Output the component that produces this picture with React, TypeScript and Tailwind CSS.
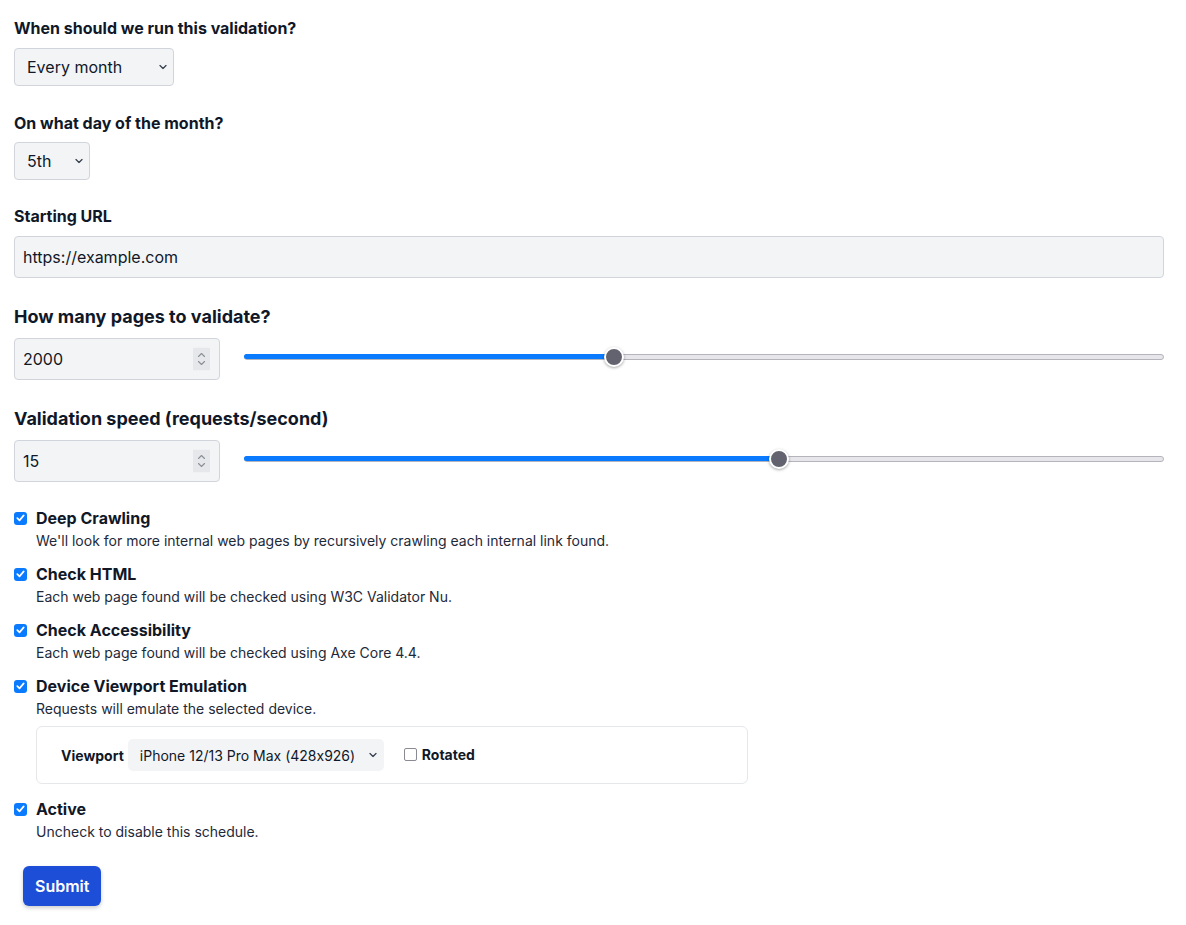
import React from 'react';

const font = "font-['Inter','Noto_Sans',sans-serif] [font-feature-settings:'calt'_0]";

const Chevron = () => (
  <svg width="8" height="5" viewBox="0 0 8 5" className="pointer-events-none absolute right-[7px] top-1/2 -translate-y-1/2">
    <path d="M1 1l3 3 3-3" stroke="#374151" strokeWidth="1.3" fill="none" strokeLinecap="round" strokeLinejoin="round" />
  </svg>
);

const Select = ({ value, width }: { value: string; width: string }) => (
  <div className={`relative ${width}`}>
    <select
      defaultValue={value}
      className="h-[38px] w-full appearance-none rounded-[4px] border border-[#d1d5db] bg-[#f3f4f6] pl-[12px] pr-6 text-[16px] text-gray-900 outline-none"
    >
      <option>{value}</option>
    </select>
    <Chevron />
  </div>
);

const Spinner = () => (
  <svg width="17" height="23" viewBox="0 0 17 23" className="pointer-events-none absolute right-[10px] top-1/2 -translate-y-1/2">
    <rect width="17" height="23" rx="1" fill="#e5e7eb" />
    <path d="M5.5 9l3-3 3 3" stroke="#8b8f96" strokeWidth="1.1" fill="none" strokeLinecap="round" strokeLinejoin="round" />
    <path d="M5.5 14l3 3 3-3" stroke="#8b8f96" strokeWidth="1.1" fill="none" strokeLinecap="round" strokeLinejoin="round" />
  </svg>
);

const Slider = ({ value, min, max }: { value: number; min: number; max: number }) => {
  const f = (value - min) / (max - min);
  return (
    <div className="relative mb-[5px] ml-6 flex h-5 flex-1 items-center">
      <div className="h-[6px] w-full rounded-full border border-[#b4b4bc] bg-[#e6e6eb]" />
      <div className="absolute left-0 h-[5px] rounded-full bg-[#0a7aff]" style={{ width: `calc((100% - 20px) * ${f} + 10px)` }} />
      <div
        className="absolute h-5 w-5 rounded-full border-2 border-white bg-[#63636f] shadow-[0_1px_3px_rgba(0,0,0,0.35)]"
        style={{ left: `calc((100% - 20px) * ${f})` }}
      />
    </div>
  );
};

const NumberRow = ({ label, value, min, max }: { label: string; value: number; min: number; max: number }) => (
  <div className="mt-[25px]">
    <div className="text-[18px] font-bold leading-[28px]">{label}</div>
    <div className="mt-[7px] flex items-center">
      <div className="relative w-[206px]">
        <input
          type="text"
          defaultValue={String(value)}
          className="h-[42px] w-full rounded-[4px] border border-[#d1d5db] bg-[#f3f4f6] px-[8px] text-[16px] text-gray-900 outline-none"
        />
        <Spinner />
      </div>
      <Slider value={value} min={min} max={max} />
    </div>
  </div>
);

const Check = ({ checked }: { checked: boolean }) =>
  checked ? (
    <span className="flex h-[13px] w-[13px] shrink-0 items-center justify-center rounded-[3px] bg-[#0a7aff]">
      <svg width="9" height="8" viewBox="0 0 9 8">
        <path d="M1.3 4.2l2.2 2.2 4.2-5" stroke="white" strokeWidth="1.7" fill="none" strokeLinecap="round" strokeLinejoin="round" />
      </svg>
    </span>
  ) : (
    <span className="h-[13px] w-[13px] shrink-0 rounded-[2px] border-[1.5px] border-[#8a8a93] bg-white" />
  );

const CheckItem = ({ label, desc, children, className }: { label: string; desc: string; children?: React.ReactNode; className: string }) => (
  <div className={className}>
    <label className="flex items-center gap-[9px]">
      <Check checked />
      <span className="text-[16px] font-bold leading-6">{label}</span>
    </label>
    <div className="ml-[22px] mt-[1px] text-[14px] leading-5 text-gray-800">{desc}</div>
    {children}
  </div>
);

export default function App() {
  return (
    <div className={`${font} bg-white pl-[14px] pr-[22px] pt-[18px] pb-[19px] text-gray-900`}>
      <div className="text-[16px] font-bold leading-5">When should we run this validation?</div>
      <div className="mt-[10px]">
        <Select value="Every month" width="w-[160px]" />
      </div>

      <div className="mt-[27px] text-[16px] font-bold leading-5">On what day of the month?</div>
      <div className="mt-[9px]">
        <Select value="5th" width="w-[76px]" />
      </div>

      <div className="mt-[26px] text-[16px] font-bold leading-5">Starting URL</div>
      <input
        type="text"
        defaultValue="https://example.com"
        className="mt-[10px] h-[42px] w-full rounded-[4px] border border-[#d1d5db] bg-[#f3f4f6] px-[8px] text-[16px] text-gray-900 outline-none"
      />

      <NumberRow label="How many pages to validate?" value={2000} min={1} max={5000} />
      <NumberRow label="Validation speed (requests/second)" value={15} min={1} max={25} />

      <CheckItem className="mt-[24px]" label="Deep Crawling" desc="We'll look for more internal web pages by recursively crawling each internal link found." />
      <CheckItem className="mt-[11px]" label="Check HTML" desc="Each web page found will be checked using W3C Validator Nu." />
      <CheckItem className="mt-[11px]" label="Check Accessibility" desc="Each web page found will be checked using Axe Core 4.4." />
      <CheckItem className="mt-[11px]" label="Device Viewport Emulation" desc="Requests will emulate the selected device.">
        <div className="ml-[22px] mt-[7px] flex h-[58px] w-[712px] items-center rounded-[6px] border border-[#e5e7eb] pl-[24px]">
          <span className="text-[14px] font-bold">Viewport</span>
          <div className="relative ml-[4px] w-[256px]">
            <select
              defaultValue="iPhone 12/13 Pro Max (428x926)"
              className="h-[32px] w-full appearance-none rounded-[5px] bg-[#f3f4f6] pl-[12px] pr-6 text-[14px] text-gray-900 outline-none"
            >
              <option>iPhone 12/13 Pro Max (428x926)</option>
            </select>
            <Chevron />
          </div>
          <label className="ml-[20px] flex items-center gap-[5px] -translate-y-[1px]">
            <Check checked={false} />
            <span className="text-[14px] font-bold">Rotated</span>
          </label>
        </div>
      </CheckItem>
      <CheckItem className="mt-[13px]" label="Active" desc="Uncheck to disable this schedule." />

      <button className="ml-[9px] mt-[24px] h-[40px] rounded-[6px] bg-[#1d4ed8] px-[12px] text-[16px] font-semibold text-white shadow-[0_2px_4px_rgba(0,0,0,0.2)]">
        Submit
      </button>
    </div>
  );
}
